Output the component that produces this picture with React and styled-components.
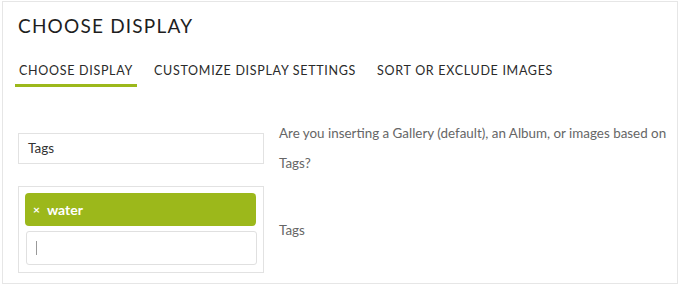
import React from 'react';
import styled, { createGlobalStyle } from 'styled-components';

const GlobalStyle = createGlobalStyle`
  html, body {
    margin: 0;
    padding: 0;
    background: #ffffff;
    font-family: Lato, "Open Sans", sans-serif;
  }
`;

const Frame = styled.div`
  box-sizing: border-box;
  margin: 1px 0 0 2px;
  width: 676px;
  height: 283px;
  border: 1px solid #e6e6e6;
  padding: 10px 4px 0 12px;
`;

const Title = styled.h1`
  margin: 0 0 0 3px;
  font-size: 19px;
  font-weight: 400;
  letter-spacing: 1.2px;
  line-height: 28px;
  color: #1e1e1e;
`;

const Tabs = styled.div`
  display: flex;
  gap: 13px;
  margin-top: 23px;
`;

const Tab = styled.div`
  font-size: 12.5px;
  letter-spacing: 0.7px;
  color: #2a2a2a;
  padding: 0 4px 5px 4px;
  line-height: 16px;
  border-bottom: 3px solid ${({ $active }) => ($active ? '#9cb81b' : 'transparent')};
`;

const Form = styled.div`
  display: grid;
  grid-template-columns: 246px 1fr;
  column-gap: 15px;
  row-gap: 8px;
  align-items: center;
  margin-top: 31px;
  padding-left: 3px;
`;

const TextInput = styled.div`
  box-sizing: border-box;
  height: 31px;
  border: 1px solid #e2e2e2;
  padding: 0 9px;
  display: flex;
  align-items: center;
  font-size: 13.5px;
  color: #333;
`;

const TagBox = styled.div`
  box-sizing: border-box;
  height: 87px;
  border: 1px solid #e2e2e2;
  padding: 6px;
  display: flex;
  flex-direction: column;
  gap: 5px;
`;

const Chip = styled.div`
  height: 33px;
  margin-right: 1px;
  background: #9cb81b;
  border-radius: 4px;
  display: flex;
  align-items: center;
  padding-left: 8px;
  gap: 7px;
  color: #fff;
  font-size: 14px;
  font-weight: 700;
`;

const ChipX = styled.span`
  font-size: 12px;
  font-weight: 700;
`;

const TagInput = styled.div`
  box-sizing: border-box;
  height: 34px;
  margin-left: 1px;
  border: 1px solid #e0e0e0;
  border-radius: 3px;
  display: flex;
  align-items: center;
  padding-left: 9px;
`;

const Caret = styled.span`
  width: 1px;
  height: 14px;
  background: #999;
`;

const Help = styled.div`
  font-size: 13.4px;
  line-height: 30px;
  color: #666;
`;

export default function App() {
  return (
    <>
      <GlobalStyle />
      <Frame>
        <Title>CHOOSE DISPLAY</Title>
        <Tabs>
          <Tab $active>CHOOSE DISPLAY</Tab>
          <Tab>CUSTOMIZE DISPLAY SETTINGS</Tab>
          <Tab>SORT OR EXCLUDE IMAGES</Tab>
        </Tabs>
        <Form>
          <TextInput>Tags</TextInput>
          <Help>Are you inserting a Gallery (default), an Album, or images based on Tags?</Help>
          <TagBox>
            <Chip>
              <ChipX>×</ChipX>
              water
            </Chip>
            <TagInput>
              <Caret />
            </TagInput>
          </TagBox>
          <Help>Tags</Help>
        </Form>
      </Frame>
    </>
  );
}
